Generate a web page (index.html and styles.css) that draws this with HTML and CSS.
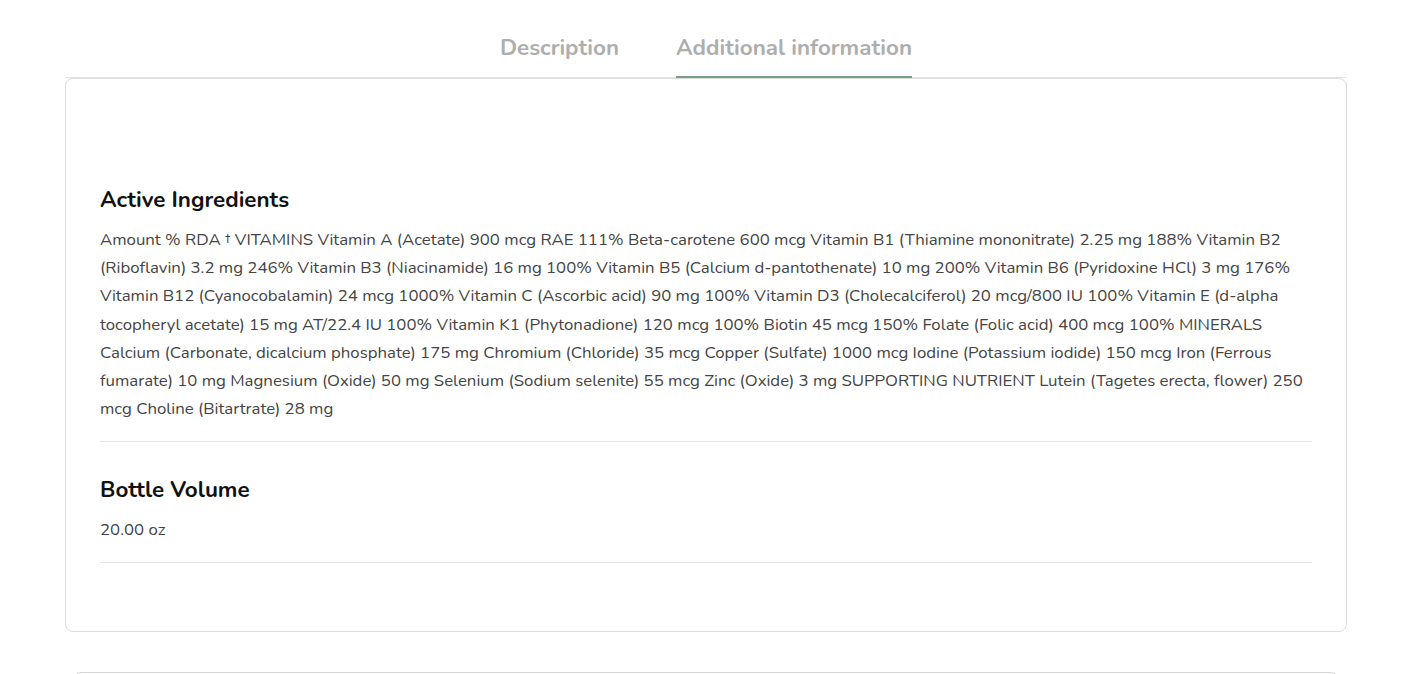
FILE: index.html
```html
<!DOCTYPE html>
<html lang="en">
<head>
<meta charset="utf-8">
<title>Additional information</title>
<link rel="stylesheet" href="styles.css">
</head>
<body>
<div class="page">
  <nav class="tabs">
    <a class="tab">Description</a>
    <a class="tab active">Additional information</a>
  </nav>
  <section class="panel">
    <div class="attr">
      <h3 class="attr-title">Active Ingredients</h3>
      <p class="attr-value">Amount % RDA † VITAMINS Vitamin A (Acetate) 900 mcg RAE 111% Beta-carotene 600 mcg Vitamin B1 (Thiamine mononitrate) 2.25 mg 188% Vitamin B2 (Riboflavin) 3.2 mg 246% Vitamin B3 (Niacinamide) 16 mg 100% Vitamin B5 (Calcium d-pantothenate) 10 mg 200% Vitamin B6 (Pyridoxine HCl) 3 mg 176% Vitamin B12 (Cyanocobalamin) 24 mcg 1000% Vitamin C (Ascorbic acid) 90 mg 100% Vitamin D3 (Cholecalciferol) 20 mcg/800 IU 100% Vitamin E (d-alpha tocopheryl acetate) 15 mg AT/22.4 IU 100% Vitamin K1 (Phytonadione) 120 mcg 100% Biotin 45 mcg 150% Folate (Folic acid) 400 mcg 100% MINERALS Calcium (Carbonate, dicalcium phosphate) 175 mg Chromium (Chloride) 35 mcg Copper (Sulfate) 1000 mcg Iodine (Potassium iodide) 150 mcg Iron (Ferrous fumarate) 10 mg Magnesium (Oxide) 50 mg Selenium (Sodium selenite) 55 mcg Zinc (Oxide) 3 mg SUPPORTING NUTRIENT Lutein (Tagetes erecta, flower) 250 mcg Choline (Bitartrate) 28 mg</p>
    </div>
    <div class="attr">
      <h3 class="attr-title">Bottle Volume</h3>
      <p class="attr-value">20.00 oz</p>
    </div>
  </section>
  <div class="next-box"></div>
</div>
</body>
</html>
```

FILE: styles.css
```css
* { box-sizing: border-box; }
html, body { margin: 0; padding: 0; background: #fff; height: 674px; overflow: hidden; }
body {
  font-family: "Nunito", "Open Sans", "Noto Sans", sans-serif;
  color: #333;
}
.page {
  padding: 0 65px;
  height: 674px;
  overflow: hidden;
}
.tabs {
  display: flex;
  justify-content: center;
  gap: 57px;
  padding-top: 33px;
  border-bottom: 1px solid #e2e2e2;
}
.tab {
  font-size: 22.4px;
  font-weight: 700;
  color: #aeaeae;
  line-height: 30px;
  padding-bottom: 13px;
  border-bottom: 2px solid transparent;
  margin-bottom: -1px;
}
.tab.active {
  border-bottom-color: #7a9e7e;
}
.panel {
  border: 1px solid #dcdcdc;
  border-radius: 8px;
  padding: 106px 34px 68px;
}
.attr {
  border-bottom: 1px solid #e6e6e6;
  padding-bottom: 18px;
}
.attr + .attr {
  padding-top: 33px;
  padding-bottom: 17px;
}
.attr-title {
  margin: 0;
  font-size: 22.4px;
  line-height: 30px;
  font-weight: 700;
  color: #111;
}
.attr-value {
  margin: 11px 0 0;
  font-size: 16.8px;
  line-height: 28.2px;
  color: #444;
}
.next-box {
  margin: 40px 8px 0;
  height: 40px;
  border: 1px solid #d6d6d6;
  border-radius: 8px;
}
```
